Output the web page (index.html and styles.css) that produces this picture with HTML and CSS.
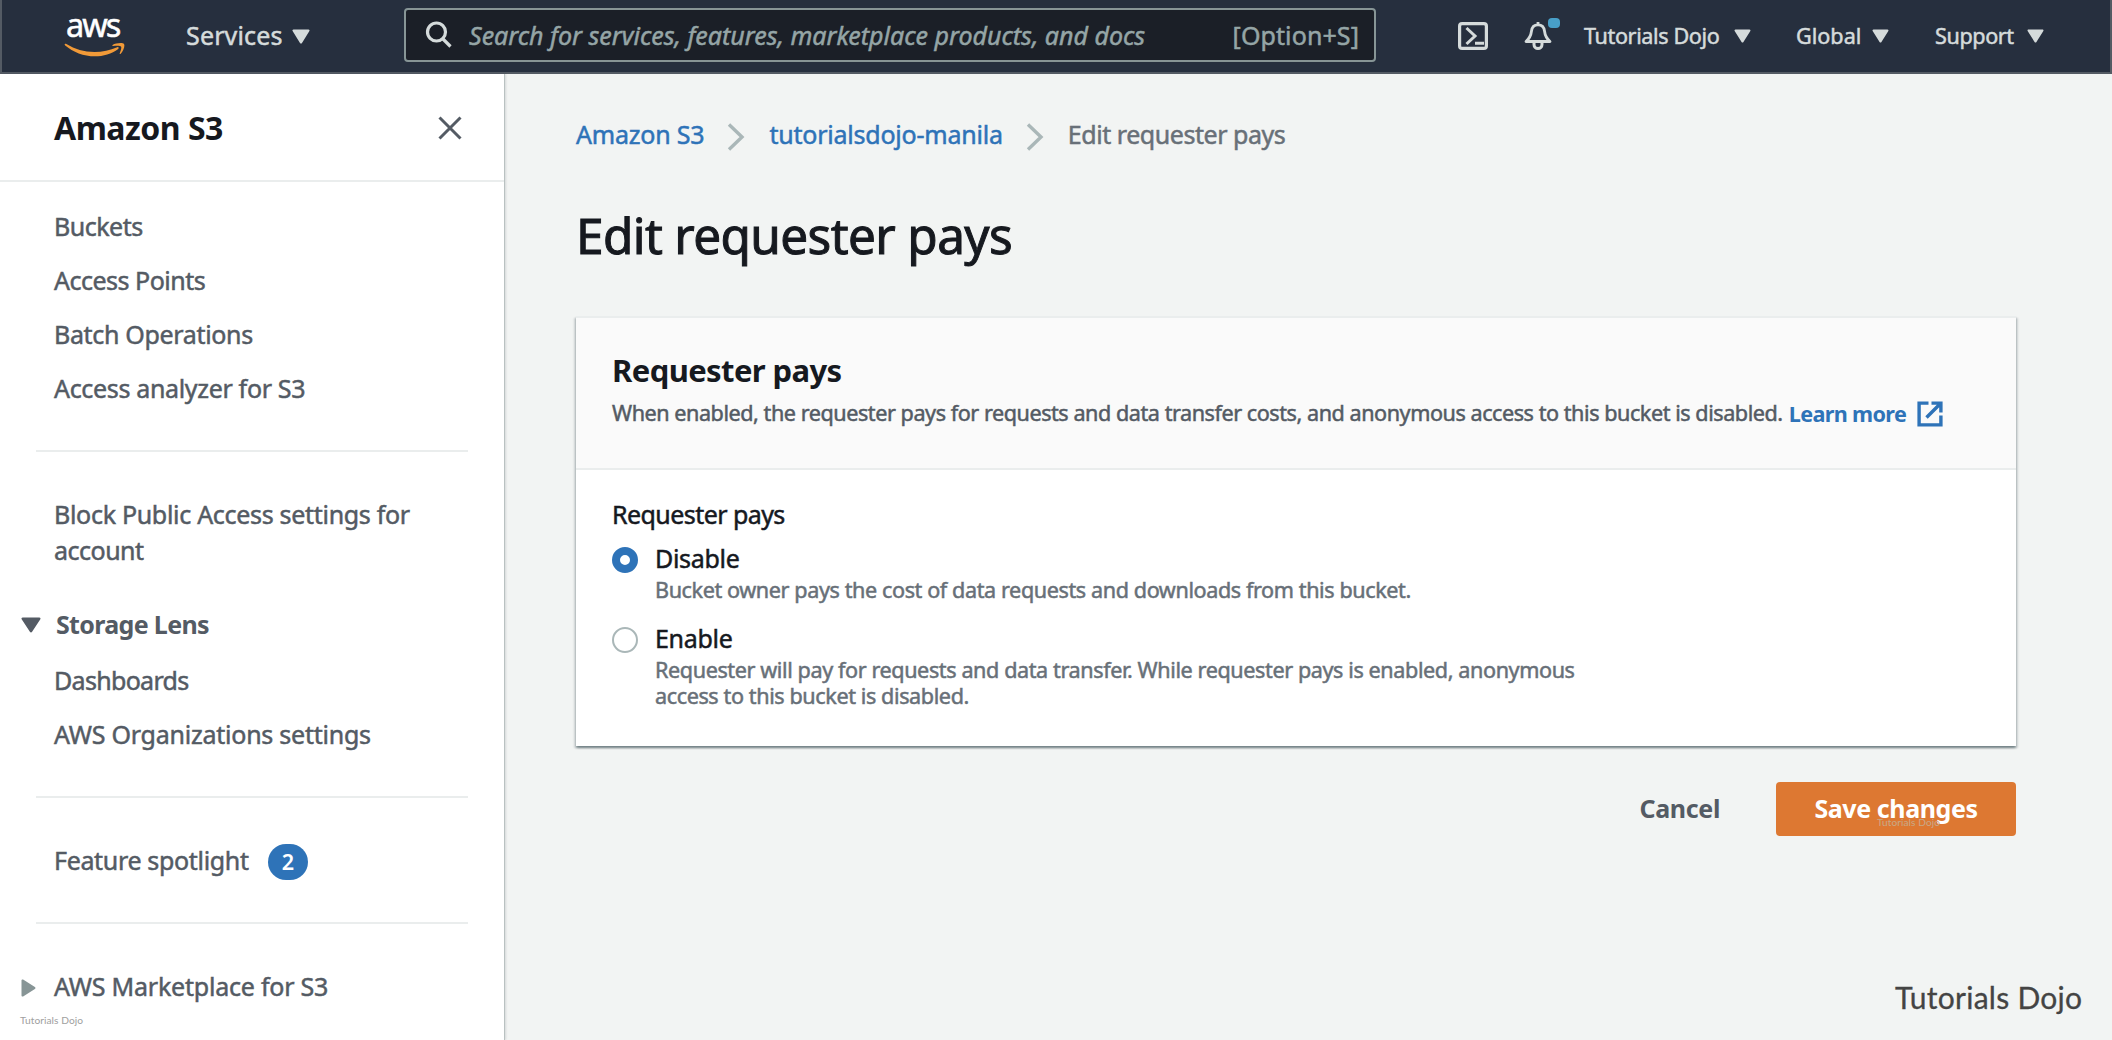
FILE: index.html
```
<!DOCTYPE html>
<html lang="en">
<head>
<meta charset="utf-8">
<title>Edit requester pays - Amazon S3</title>
<link rel="stylesheet" href="styles.css">
</head>
<body>
<header class="topbar">
  <a class="logo">
    <span class="logo-text">aws</span>
    <svg class="logo-smile" width="62" height="15" viewBox="0 0 62 15"><path fill="#f19a38" d="M.6 1.3C.9.6 1.6.6 2.400 1.100 11 6.300 20 9.100 30.500 9.100 38.500 9.100 46 7.300 53.200 4.200 54.500 3.700 55.300 5 54.200 5.900 47.800 10.800 39 13.300 31 13.300 19.500 13.300 9 9 1.200 2.400 .8 2 .5 1.700 .6 1.300Z"/><path fill="#f19a38" d="M48.600 2C51.500 0 58.800-.6 60 .9 61.200 2.500 59.500 8.200 56.500 10.900 56 11.300 55.500 11 55.700 10.500 56.500 8.300 57.900 4.500 57 3.400 56.100 2.300 51.500 2.700 49 3 48.200 3.100 48.100 2.500 48.600 2Z"/></svg>
  </a>
  <a class="services">Services<svg class="caret" width="18" height="15" viewBox="0 0 18 15"><path d="M1.500.5h15c.9 0 1.300.9.9 1.600L10 13.900c-.5.800-1.500.8-2 0L.6 2.100C.2 1.400.600.500 1.500.500Z"/></svg></a>
  <div class="search">
    <svg width="28" height="28" viewBox="0 0 28 28" fill="none" stroke="#d5dbdb" stroke-width="3.200"><circle cx="11.500" cy="11" r="9"/><path d="M17.500 17.500l8 8"/></svg>
    <span class="placeholder">Search for services, features, marketplace products, and docs</span>
    <span class="shortcut">[Option+S]</span>
  </div>
  <svg class="shell" width="30" height="28" viewBox="0 0 30 28" fill="none" stroke="#d5dbdb" stroke-width="3.200"><rect x="1.600" y="1.600" width="26.800" height="24.800" rx="2.500"/><path d="M8.500 6l8.500 8-8.500 8M17 21.300h9" stroke-width="3"/></svg>
  <span class="bell">
    <svg width="28" height="30" viewBox="0 0 28 30" fill="none" stroke="#d5dbdb" stroke-width="2.800"><path d="M14 1v3M2 20.500c4-3.500 5-6 5.500-10.500C8 5.500 10.500 3.800 14 3.800s6 1.700 6.500 6.200c.5 4.500 1.500 7 5.500 10.500Z" stroke-linejoin="round"/><path d="M10 21v2.500a4 4 0 0 0 8 0V21" stroke-width="3"/></svg>
    <i class="dot"></i>
  </span>
  <a class="menu account-menu">Tutorials Dojo<svg class="caret" width="17" height="14" viewBox="0 0 18 15"><path d="M1.500.5h15c.9 0 1.300.9.9 1.600L10 13.900c-.5.800-1.500.8-2 0L.6 2.100C.2 1.400.600.500 1.500.500Z"/></svg></a>
  <a class="menu region-menu">Global<svg class="caret" width="17" height="14" viewBox="0 0 18 15"><path d="M1.500.5h15c.9 0 1.300.9.9 1.600L10 13.900c-.5.800-1.500.8-2 0L.6 2.100C.2 1.400.600.500 1.500.500Z"/></svg></a>
  <a class="menu support-menu">Support<svg class="caret" width="17" height="14" viewBox="0 0 18 15"><path d="M1.500.5h15c.9 0 1.300.9.9 1.600L10 13.900c-.5.800-1.500.8-2 0L.6 2.100C.2 1.400.600.500 1.500.500Z"/></svg></a>
</header>
<div class="layout">
  <aside class="sidebar">
    <div class="side-head">
      <h2>Amazon S3</h2>
      <svg width="24" height="24" viewBox="0 0 24 24" stroke="#545b64" stroke-width="3"><path d="M1.500 1.500l21 21M22.500 1.500l-21 21"/></svg>
    </div>
    <nav class="side-nav">
      <div class="group">
        <a class="tight">Buckets</a>
        <a class="tight">Access Points</a>
        <a>Batch Operations</a>
        <a>Access analyzer for S3</a>
      </div>
      <hr>
      <a class="wrap">Block Public Access settings for <span class="tight">account</span></a>
      <div class="section-title"><svg width="20" height="16" viewBox="0 0 18 15" preserveAspectRatio="none" fill="#545b64"><path d="M1.500.5h15c.9 0 1.300.9.9 1.600L10 13.900c-.5.800-1.500.8-2 0L.6 2.100C.2 1.400.600.500 1.500.500Z"/></svg>Storage Lens</div>
      <div class="group">
        <a class="tighter">Dashboards</a>
        <a class="loose">AWS Organizations settings</a>
      </div>
      <hr>
      <a class="feature">Feature spotlight<span class="badge">2</span></a>
      <hr>
      <div class="market"><svg width="15" height="18" viewBox="0 0 15 18" fill="#879596"><path d="M.5 1.500v15c0 .9.900 1.300 1.600.9L13.900 10c.8-.5.800-1.500 0-2L2.100.6C1.400.2.500.600.500 1.500Z"/></svg>AWS Marketplace for S3</div>
    </nav>
  </aside>
  <main class="content">
    <nav class="crumbs">
      <a class="c1">Amazon S3</a>
      <svg width="18" height="28" viewBox="0 0 18 28"><path d="M2 1.500l13 12.500-13 12.500"/></svg>
      <a class="c2">tutorialsdojo-manila</a>
      <svg width="18" height="28" viewBox="0 0 18 28"><path d="M2 1.500l13 12.500-13 12.500"/></svg>
      <span class="c3">Edit requester pays</span>
    </nav>
    <h1>Edit requester pays</h1>
    <section class="card">
      <div class="card-head">
        <h3>Requester pays</h3>
        <p><span class="desc">When enabled, the requester pays for requests and data transfer costs, and anonymous access to this bucket is disabled.</span><a class="learn">Learn more</a><svg width="26" height="26" viewBox="0 0 26 26" fill="none" stroke="#2e73b8" stroke-width="3.400"><path d="M11.500 2.100H2.100v21.800h21.800v-9.400M14.500 2.100h9.400v9.400M23.500 2.500L9.500 16.500"/></svg></p>
      </div>
      <div class="card-body">
        <div class="label">Requester pays</div>
        <div class="option">
          <i class="radio checked"></i>
          <div><div class="name">Disable</div><p class="hint">Bucket owner pays the cost of data requests and downloads from this bucket.</p></div>
        </div>
        <div class="option">
          <i class="radio"></i>
          <div><div class="name">Enable</div><p class="hint">Requester will pay for requests and data transfer. While requester pays is enabled, anonymous access to this bucket is disabled.</p></div>
        </div>
      </div>
    </section>
    <div class="actions">
      <a class="cancel">Cancel</a>
      <button class="save">Save changes<span class="mark mark-button">Tutorials Dojo</span></button>
    </div>
  </main>
</div>
<span class="mark mark-side">Tutorials Dojo</span>
<span class="mark mark-corner">Tutorials Dojo</span>
</body>
</html>
```
FILE: styles.css
```
* { box-sizing: border-box; }
body {
  margin: 0;
  height: 1040px;
  overflow: hidden;
  position: relative;
  font: 25px/36px "Noto Sans", "Open Sans", sans-serif;
  letter-spacing: -.33px;
  color: #16191f;
  background: #f2f4f3;
  -webkit-text-stroke: .5px;
}
h1, h2, h3, p { margin: 0; }
a, span, h2 { white-space: nowrap; }
svg { flex: none; display: block; }

.topbar {
  height: 74px;
  display: flex;
  align-items: center;
  background: #262f3e;
  border: 2px solid #545b64;
  border-top: 0;
  color: #d5dbdb;
}
.caret { fill: #d5dbdb; }
.logo { width: 60px; margin: -5px 0 0 62px; }
.logo-text {
  display: block;
  height: 31px;
  line-height: 31px;
  margin: 0 0 3px 2px;
  font-size: 32.500px;
  letter-spacing: -2px;
  color: #fff;
  -webkit-text-stroke: .5px;
}
.services { display: flex; align-items: center; width: 124px; margin: -2px 0 0 62px; letter-spacing: .15px; justify-content: space-between; }
.services .caret { margin-top: 2px; }
.search {
  width: 972px;
  height: 54px;
  margin: -2px 82px 0 94px;
  padding: 0 15px 0 19px;
  display: flex;
  align-items: center;
  border: 2px solid #879596;
  border-radius: 4px;
  background: #1b1f27;
  color: #95a5a6;
}
.placeholder { margin-left: 16px; font-style: italic; letter-spacing: 0; }
.shortcut { margin-left: auto; letter-spacing: .1px; }
.bell { position: relative; margin-left: 36px; }
.dot {
  position: absolute;
  left: 24px;
  top: -3px;
  width: 12px;
  height: 10px;
  border-radius: 4px;
  background: #489fc8;
}
.menu { display: flex; align-items: center; justify-content: space-between; font-size: 21.6px; }
.account-menu { width: 167px; margin-left: 32px; letter-spacing: -.38px; }
.region-menu { width: 93px; margin-left: 45px; letter-spacing: 0; }
.support-menu { width: 109px; margin-left: 46px; letter-spacing: -.4px; }

.layout { display: flex; height: 966px; }
.sidebar {
  width: 505px;
  flex: none;
  background: #fff;
  border-right: 1px solid #b9c1c1;
  box-shadow: 1px 0 2px rgba(0, 28, 36, .12);
  color: #545b64;
}
.side-head {
  height: 108px;
  padding: 2px 42px 0 54px;
  display: flex;
  align-items: center;
  justify-content: space-between;
  border-bottom: 2px solid #eaeded;
}
.side-head h2 { font-size: 32px; letter-spacing: -.5px; color: #16191f; -webkit-text-stroke: 0; }
.side-nav { padding: 26px 36px 0 54px; }
.side-nav a { display: block; }
.group { display: flex; flex-direction: column; gap: 18px; }
.side-nav hr { height: 2px; margin: 44px 0 44px -18px; border: 0; background: #eaeded; }
.side-nav .wrap { white-space: normal; letter-spacing: -.3px; }
.tight { letter-spacing: -.5px; }
.tighter { letter-spacing: -.68px; }
.loose { letter-spacing: -.24px; }
.section-title {
  display: flex;
  align-items: center;
  gap: 15px;
  margin: 38px 0 20px -33px;
  font-weight: 700;
  letter-spacing: -.66px;
  -webkit-text-stroke: 0;
}
.section-title svg { margin-top: 2px; }
.side-nav .feature { display: flex; align-items: center; height: 36px; }
.badge {
  width: 40px;
  height: 36px;
  margin: 4px 0 0 19px;
  line-height: 35px;
  border-radius: 18px;
  text-align: center;
  font-size: 21.6px;
  font-weight: 600;
  color: #fff;
  background: #2e73b8;
  -webkit-text-stroke: 0;
}
.market { display: flex; align-items: center; gap: 18px; margin-left: -33px; letter-spacing: -.22px; white-space: nowrap; }
.market svg { margin-top: 4px; }

.content { flex: 1; padding: 42px 96px 0 71px; }
.crumbs { display: flex; color: #687078; }
.crumbs svg { margin: 7px 24px 0 23px; fill: none; stroke: #aab7b8; stroke-width: 3.400; }
.crumbs a { color: #2e73b8; }
.c1 { letter-spacing: -.2px; }
.c2 { letter-spacing: -.22px; }
.c3 { letter-spacing: -.45px; }
h1 { margin: 53px 0 51px; font-size: 49.500px; line-height: 60px; font-weight: 400; letter-spacing: -.62px; -webkit-text-stroke: 1px; }

.card {
  border-top: 2px solid #eaeded;
  background: #fff;
  box-shadow: 0 2px 2px rgba(0, 28, 36, .38), 2px 2px 2px rgba(0, 28, 36, .13), -2px 2px 2px rgba(0, 28, 36, .13);
}
.card-head { height: 152px; padding: 32px 36px 0; background: #fafafa; border-bottom: 2px solid #eaeded; }
.card-head h3 { font-size: 31px; line-height: 40px; letter-spacing: -.6px; -webkit-text-stroke: 0; }
.card-head p { display: flex; align-items: center; margin-top: 9px; font-size: 21.6px; line-height: 26px; color: #545b64; }
.card-head p svg { margin-top: 2px; }
.desc { letter-spacing: -.45px; }
.learn { margin: 2px 11px 0 6px; font-weight: 700; letter-spacing: -.64px; color: #2e73b8; -webkit-text-stroke: 0; }
.card-body { height: 276px; padding: 26px 36px 0; }
.label { letter-spacing: -.56px; }
.option { display: flex; gap: 17px; margin-top: 8px; }
.option + .option { margin-top: 17px; }
.radio { flex: none; width: 26px; height: 26px; margin-top: 7px; border: 2px solid #aab7b8; border-radius: 50%; }
.radio.checked { border: 8px solid #2e73b8; }
.name { letter-spacing: -.3px; }
.hint { width: 940px; margin-top: 1px; font-size: 21.6px; line-height: 26px; letter-spacing: -.4px; color: #687078; }

.actions { display: flex; justify-content: flex-end; align-items: center; margin-top: 36px; font-weight: 700; -webkit-text-stroke: 0; }
.cancel { margin: -2px 56px 0 0; letter-spacing: -.35px; color: #545b64; }
.save {
  position: relative;
  width: 240px;
  height: 54px;
  padding: 0 0 2px;
  border: 0;
  border-radius: 4px;
  font: inherit;
  letter-spacing: -.41px;
  color: #fff;
  background: #dd7832;
}
.mark { position: absolute; font-family: Lato, sans-serif; font-weight: 400; -webkit-text-stroke: 0; }
.mark-button { left: 101px; top: 30px; font-size: 10.200px; line-height: 20px; letter-spacing: .05px; color: #c8a888; }
.mark-side { left: 20px; top: 1010px; font-size: 10.200px; line-height: 20px; letter-spacing: .05px; color: #a0a0a0; }
.mark-corner { left: 1895px; top: 979px; font-size: 30px; line-height: 36px; letter-spacing: .26px; color: #444; -webkit-text-stroke: .3px; }
```
